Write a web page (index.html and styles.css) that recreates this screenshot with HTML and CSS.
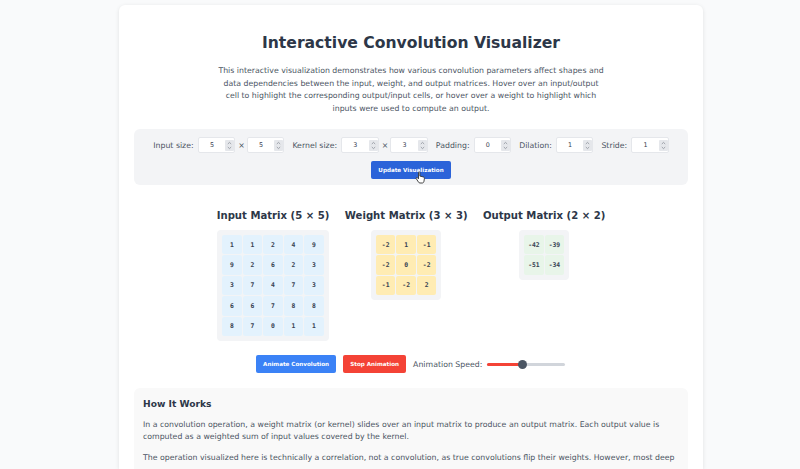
FILE: index.html
```html
<!DOCTYPE html>
<html lang="en">

<head>
    <meta charset="UTF-8">
    <meta name="viewport" content="width=device-width, initial-scale=1.0">
    <title>Interactive Convolution Visualizer</title>
    <link rel="stylesheet" href="styles.css">
</head>

<body>
    <svg class="sprites" width="0" height="0">
        <symbol id="spin" viewBox="0 0 9 11">
            <rect width="9" height="11" rx="1" fill="#e5e7eb"/>
            <path d="M2.8 4 4.5 2.4 6.2 4M2.8 7 4.5 8.6 6.2 7" fill="none" stroke="#8a8f98" stroke-width=".8"/>
        </symbol>
    </svg>
    <div class="card">
        <h1>Interactive Convolution Visualizer</h1>
        <p class="intro">This interactive visualization demonstrates how various convolution parameters affect shapes and data dependencies between the input, weight, and output matrices. Hover over an input/output cell to highlight the corresponding output/input cells, or hover over a weight to highlight which inputs were used to compute an output.</p>

        <div class="controls">
            <div class="control-row">
                <label>Input size:</label>
                <div class="num"><input value="5"><svg width="9" height="11"><use href="#spin"/></svg></div>
                <span class="times">×</span>
                <div class="num"><input value="5"><svg width="9" height="11"><use href="#spin"/></svg></div>
                <label class="next">Kernel size:</label>
                <div class="num"><input value="3"><svg width="9" height="11"><use href="#spin"/></svg></div>
                <span class="times">×</span>
                <div class="num"><input value="3"><svg width="9" height="11"><use href="#spin"/></svg></div>
                <label class="next">Padding:</label>
                <div class="num"><input value="0"><svg width="9" height="11"><use href="#spin"/></svg></div>
                <label class="next">Dilation:</label>
                <div class="num"><input value="1"><svg width="9" height="11"><use href="#spin"/></svg></div>
                <label class="next">Stride:</label>
                <div class="num"><input value="1"><svg width="9" height="11"><use href="#spin"/></svg></div>
            </div>
            <div class="update-row">
                <button class="btn btn-update">Update Visualization</button>
                <svg class="pointer" width="11" height="13" viewBox="0 0 11 13">
                    <path d="M3.5 1.5c0-.9 1.4-.9 1.4 0v3.6l3.3.8c.9.2 1.3.8 1.2 1.6l-.4 2.6c-.1.9-.7 1.9-1.6 1.9H5c-.7 0-1.1-.3-1.5-.9L1.2 7.6c-.5-.8.5-1.5 1.2-.9l1.1 1.1z" fill="#fff" stroke="#333" stroke-width=".9"/>
                </svg>
            </div>
        </div>

        <div class="matrices">
            <div class="matrix-block">
                <h3>Input Matrix (5 × 5)</h3>
                <div class="matrix cols-5 input-m">
                    <div>1</div><div>1</div><div>2</div><div>4</div><div>9</div>
                    <div>9</div><div>2</div><div>6</div><div>2</div><div>3</div>
                    <div>3</div><div>7</div><div>4</div><div>7</div><div>3</div>
                    <div>6</div><div>6</div><div>7</div><div>8</div><div>8</div>
                    <div>8</div><div>7</div><div>0</div><div>1</div><div>1</div>
                </div>
            </div>
            <div class="matrix-block">
                <h3>Weight Matrix (3 × 3)</h3>
                <div class="matrix cols-3 weight-m">
                    <div>-2</div><div>1</div><div>-1</div>
                    <div>-2</div><div>0</div><div>-2</div>
                    <div>-1</div><div>-2</div><div>2</div>
                </div>
            </div>
            <div class="matrix-block">
                <h3>Output Matrix (2 × 2)</h3>
                <div class="matrix cols-2 output-m">
                    <div>-42</div><div>-39</div>
                    <div>-51</div><div>-34</div>
                </div>
            </div>
        </div>

        <div class="animation">
            <button class="btn btn-animate">Animate Convolution</button>
            <button class="btn btn-stop">Stop Animation</button>
            <label>Animation Speed:</label>
            <div class="slider"><span class="slider-fill"></span><span class="slider-thumb"></span></div>
        </div>

        <div class="explain">
            <h2>How It Works</h2>
            <p>In a convolution operation, a weight matrix (or kernel) slides over an input matrix to produce an output matrix. Each output value is computed as a weighted sum of input values covered by the kernel.</p>
            <p>The operation visualized here is technically a correlation, not a convolution, as true convolutions flip their weights. However, most deep</p>
        </div>
    </div>
</body>

</html>
```

FILE: styles.css
```css
html, body {
    height: 469px;
    overflow: hidden;
}

body {
    margin: 0;
    padding: 5px 0 0;
    box-sizing: border-box;
    background-color: #f9fafb;
    font-family: "DejaVu Sans", sans-serif;
    color: #4b5563;
}

.sprites {
    display: block;
}

.card {
    width: 584px;
    height: 464px;
    overflow: hidden;
    margin-left: 119px;
    padding: 0 15px;
    box-sizing: border-box;
    background-color: #fff;
    border-radius: 6px 6px 0 0;
    box-shadow: 0 1px 4px rgba(0, 0, 0, 0.1);
}

h1 {
    margin: 0;
    padding-top: 28px;
    font-size: 15.6px;
    line-height: 21px;
    text-align: center;
    color: #2d3748;
}

.intro {
    margin: 11px auto 0;
    width: 390px;
    font-size: 7.8px;
    line-height: 12.5px;
    text-align: center;
}

.controls {
    margin-top: 14px;
    height: 56px;
    padding-top: 8px;
    box-sizing: border-box;
    background-color: #f3f4f6;
    border-radius: 6px;
}

.control-row {
    display: flex;
    justify-content: center;
    align-items: center;
    height: 16px;
    font-size: 7.8px;
}

.num {
    display: flex;
    align-items: center;
    width: 37.6px;
    height: 16px;
    box-sizing: border-box;
    margin-left: 4px;
    border: 1px solid #e5e7eb;
    border-radius: 2px;
    background-color: #fff;
}

.num input {
    width: 26.6px;
    padding: 0;
    border: none;
    background: none;
    font-family: inherit;
    font-size: 6.4px;
    text-align: center;
    color: #374151;
}

.times {
    margin-left: 3px;
    margin-right: -2px;
}

.next {
    margin-left: 8px;
}

.update-row {
    position: relative;
    display: flex;
    justify-content: center;
    margin-top: 7.5px;
}

.pointer {
    position: absolute;
    left: 281px;
    top: 10px;
}

.btn {
    border: none;
    border-radius: 2px;
    color: #fff;
    font-family: inherit;
    font-weight: bold;
    font-size: 5.6px;
    height: 18px;
    padding: 0;
    white-space: nowrap;
}

.btn-update {
    width: 80px;
    background-color: #2b63d9;
}

.btn-animate {
    width: 80px;
    background-color: #3b82f6;
}

.btn-stop {
    width: 63px;
    background-color: #f44336;
}

.matrices {
    display: flex;
    justify-content: center;
    gap: 15.5px;
    margin-top: 24px;
}

.matrix-block {
    display: flex;
    flex-direction: column;
    align-items: center;
}

h3 {
    margin: 0 0 7px;
    font-size: 10.1px;
    line-height: 14px;
    color: #2d3748;
}

.matrix {
    display: grid;
    gap: 1px;
    padding: 5px;
    background-color: #f3f4f6;
    border-radius: 4px;
}

.cols-5 { grid-template-columns: repeat(5, 19.5px); }
.cols-3 { grid-template-columns: repeat(3, 19.5px); }
.cols-2 { grid-template-columns: repeat(2, 19.5px); }

.matrix div {
    height: 19.4px;
    display: flex;
    align-items: center;
    justify-content: center;
    border-radius: 2px;
    font-family: "DejaVu Sans Mono", monospace;
    font-weight: bold;
    font-size: 6.4px;
    color: #374151;
}

.input-m div { background-color: #e3f2fd; }
.weight-m div { background-color: #ffecb3; }
.output-m div { background-color: #e8f5e9; }

.animation {
    display: flex;
    align-items: center;
    justify-content: center;
    gap: 7px;
    margin-top: 14.5px;
    margin-left: -1px;
    height: 18px;
    font-size: 7.8px;
}

.animation label {
    margin-right: -2.5px;
}

.slider {
    position: relative;
    width: 78px;
    height: 3px;
    background-color: #d1d5db;
    border-radius: 2px;
}

.slider-fill {
    position: absolute;
    left: 0;
    top: 0;
    width: 35px;
    height: 3px;
    background-color: #f44336;
    border-radius: 2px;
}

.slider-thumb {
    position: absolute;
    left: 31px;
    top: -3px;
    width: 9px;
    height: 9px;
    border-radius: 50%;
    background-color: #4b5563;
}

.explain {
    margin-top: 14.5px;
    padding: 9px;
    height: 90px;
    background-color: #f9f9f9;
    border-radius: 6px 6px 0 0;
}

h2 {
    margin: 0;
    font-size: 9.15px;
    line-height: 14px;
    color: #2d3748;
}

.explain p {
    margin: 8px 0 0;
    font-size: 7.8px;
    line-height: 12.5px;
}

h2 + p {
    margin-top: 9.75px;
}
```
